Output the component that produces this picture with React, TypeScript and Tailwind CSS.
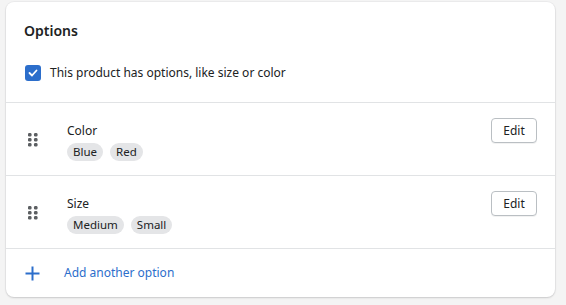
const OPTIONS = [
  { name: "Color", values: ["Blue", "Red"] },
  { name: "Size", values: ["Medium", "Small"] },
];

function DragHandle() {
  return (
    <svg width="10" height="14" viewBox="0 0 10 14" className="text-[#5c5f62]">
      {[0, 5, 10].map((y) =>
        [0, 6].map((x) => (
          <rect key={`${x}-${y}`} x={x} y={y} width="3.5" height="3.5" rx="1.2" fill="currentColor" />
        ))
      )}
    </svg>
  );
}

export default function App() {
  return (
    <div
      className="min-h-screen bg-[#f4f4f4] px-[6px] pt-[2px]"
      style={{ fontFamily: '"Noto Sans", "Open Sans", sans-serif' }}
    >
      <div className="w-[549px] overflow-hidden rounded-lg bg-white shadow-[0_1px_2px_rgba(0,0,0,0.15),0_0_0_1px_rgba(63,63,68,0.04)]">
        <div className="px-[18px] pt-[19px] pb-[19px]">
          <h2 className="text-[14px] font-semibold leading-5 text-[#202223]">Options</h2>
          <label className="mt-[22px] flex items-center gap-[9px]">
            <span className="ml-px flex h-4 w-4 items-center justify-center rounded-[3px] bg-[#2c6ecb]">
              <svg width="10" height="8" viewBox="0 0 10 8" fill="none">
                <path d="M1.5 4l2.5 2.5L8.5 1.5" stroke="white" strokeWidth="1.8" strokeLinecap="round" strokeLinejoin="round" />
              </svg>
            </span>
            <span className="text-[12px] leading-5 text-[#202223]">
              This product has options, like size or color
            </span>
          </label>
        </div>

        {OPTIONS.map((opt) => (
          <div
            key={opt.name}
            className="flex h-[73px] items-start border-t border-[#e1e3e5] pt-[15px] pr-[18px] pl-[22px]"
          >
            <div className="mt-[15px] w-[39px]">
              <DragHandle />
            </div>
            <div className="flex-1 pt-[3px]">
              <p className="text-[12px] leading-5 text-[#202223]">{opt.name}</p>
              <div className="mt-[2px] flex gap-[7px]">
                {opt.values.map((v) => (
                  <span
                    key={v}
                    className="flex h-[18px] items-center rounded-full bg-[#e4e5e7] px-[6px] text-[11.5px] text-[#202223]"
                  >
                    {v}
                  </span>
                ))}
              </div>
            </div>
            <button className="h-[25px] w-[46px] rounded-[4px] border border-[#babfc3] bg-white text-[12px] text-[#202223] shadow-[0_1px_0_rgba(0,0,0,0.05)]">
              Edit
            </button>
          </div>
        ))}

        <div className="flex h-[49px] items-center border-t border-[#e1e3e5] pl-[19px]">
          <svg width="15" height="15" viewBox="0 0 15 15" className="text-[#2c6ecb]">
            <path d="M7.5 0.5v14M0.5 7.5h14" stroke="currentColor" strokeWidth="2" />
          </svg>
          <span className="ml-[24px] text-[12px] text-[#2c6ecb]">Add another option</span>
        </div>
      </div>
    </div>
  );
}
